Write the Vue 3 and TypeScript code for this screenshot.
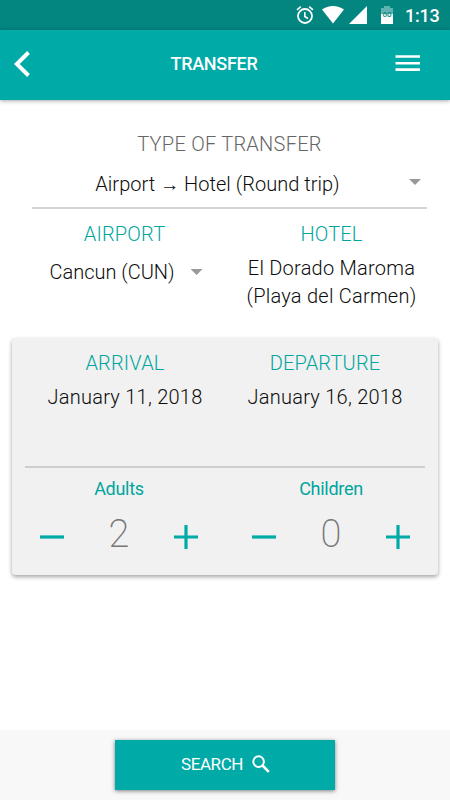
<script setup lang="ts">
import { ref } from 'vue'

interface Counter {
  label: string
  count: number
}

const counters = ref<Counter[]>([
  { label: 'Adults', count: 2 },
  { label: 'Children', count: 0 },
])

const dates = [
  { label: 'ARRIVAL', value: 'January 11, 2018' },
  { label: 'DEPARTURE', value: 'January 16, 2018' },
]

function step(counter: Counter, delta: number) {
  counter.count = Math.max(0, counter.count + delta)
}
</script>

<template>
  <div class="screen">
    <div class="status">
      <svg class="alarm" viewBox="0 0 18 20" width="18" height="20">
        <circle cx="9" cy="11" r="7" fill="none" stroke="#fff" stroke-width="1.8" />
        <path d="M1 4.8 4.8 1.6M17 4.8 13.200 1.600M8.800 7v4.500l3.200 2" fill="none" stroke="#fff" stroke-width="1.6" />
      </svg>
      <svg class="wifi" viewBox="0 0 22 18" width="22" height="18">
        <path d="M0 3.600Q5 0 11 0t11 3.600L11 17.600z" fill="#fff" />
      </svg>
      <svg class="signal" viewBox="0 0 18 18" width="18" height="18">
        <path d="M18 0v18H0z" fill="#fff" />
      </svg>
      <div class="battery">
        <svg viewBox="0 0 12 18" width="12" height="18">
          <path d="M0 2h3V0h6v2h3v6H0z" fill="#5eb2af" />
          <path d="M0 8h12v10H0z" fill="#fff" />
        </svg>
        <span class="level">60</span>
      </div>
      <span class="clock">1:13</span>
    </div>

    <header class="bar">
      <svg class="back" viewBox="0 0 16 26" width="16" height="26">
        <path d="M14.500 1.500 2.800 13l11.700 11.500" fill="none" stroke="#fff" stroke-width="4" />
      </svg>
      <h1 class="title">TRANSFER</h1>
      <svg class="menu" viewBox="0 0 25 17" width="25" height="17">
        <path d="M.5 1.500h24.500M.5 8.300h24.500M.5 14.600h24.500" stroke="#fff" stroke-width="2.600" />
      </svg>
    </header>

    <main class="content">
      <section class="type">
        <div class="type-label">TYPE OF TRANSFER</div>
        <div class="select">
          <span class="select-text">Airport <span class="arrow">→</span> Hotel (Round trip)</span>
          <i class="caret"></i>
        </div>
      </section>

      <section class="places">
        <div class="place from">
          <div class="heading">AIRPORT</div>
          <div class="airport"><span>Cancun (CUN)</span><i class="caret"></i></div>
        </div>
        <div class="place to">
          <div class="heading">HOTEL</div>
          <div class="hotel">El Dorado Maroma<br />(Playa del Carmen)</div>
        </div>
      </section>

      <section class="card">
        <div class="dates">
          <div v-for="d in dates" :key="d.label" class="date">
            <div class="heading">{{ d.label }}</div>
            <div class="date-value">{{ d.value }}</div>
          </div>
        </div>
        <div class="counters">
          <div v-for="c in counters" :key="c.label" class="counter">
            <div class="counter-label">{{ c.label }}</div>
            <div class="stepper">
              <button class="step" @click="step(c, -1)">
                <svg viewBox="0 0 24 24" width="24" height="24"><path d="M0 12h24" stroke="#00aaa7" stroke-width="3.200" /></svg>
              </button>
              <span class="count">{{ c.count }}</span>
              <button class="step" @click="step(c, 1)">
                <svg viewBox="0 0 24 24" width="24" height="24"><path d="M0 12h24M12 0v24" stroke="#00aaa7" stroke-width="3.200" /></svg>
              </button>
            </div>
          </div>
        </div>
      </section>
    </main>

    <footer class="footer">
      <button class="search">
        <span class="search-text">SEARCH</span>
        <svg viewBox="0 0 18 18" width="18" height="18">
          <circle cx="6.600" cy="6.600" r="5.300" fill="none" stroke="#fff" stroke-width="2" />
          <path d="m10.500 10.500 6.300 6.300" stroke="#fff" stroke-width="2.500" />
        </svg>
      </button>
    </footer>
  </div>
</template>

<style>
body {
  margin: 0;
  background: #fff;
}
</style>

<style scoped>
.screen {
  width: 450px;
  height: 800px;
  display: flex;
  flex-direction: column;
  overflow: hidden;
  background: #fff;
  color: #0c0c0c;
  font-family: Roboto, sans-serif;
  font-size: 20px;
  font-weight: 300;
}
.screen * {
  box-sizing: border-box;
}
svg {
  display: block;
  flex: none;
}
button {
  border: 0;
  padding: 0;
  background: none;
  font: inherit;
  color: inherit;
}
.status {
  height: 30px;
  flex: none;
  display: flex;
  align-items: flex-start;
  padding: 5px 0 0 296px;
  background: #038580;
  color: #fff;
}
.wifi {
  margin: 1px 0 0 8px;
}
.signal {
  margin: 1px 0 0 5px;
}
.battery {
  position: relative;
  margin: 1px 0 0 14px;
}
.level {
  position: absolute;
  left: 0;
  top: 4px;
  width: 12px;
  text-align: center;
  font-size: 8px;
  line-height: 10px;
  font-weight: 500;
  color: #038580;
}
.clock {
  margin-left: 12px;
  font-size: 18px;
  line-height: 22px;
  font-weight: 500;
  letter-spacing: -0.2px;
}
.bar {
  height: 70px;
  flex: none;
  display: flex;
  align-items: center;
  padding: 0 30px 3px 14px;
  background: #00aaa7;
  color: #fff;
  box-shadow: 0 1px 4px rgba(0, 0, 0, 0.35);
}
.title {
  flex: 1;
  margin: 0;
  padding-left: 3px;
  text-align: center;
  font-size: 18px;
  letter-spacing: -0.3px;
  font-weight: 500;
}
.menu {
  margin-top: -1px;
}
.content {
  flex: 1;
}
.type {
  margin: 0 23px 0 32px;
  padding-top: 30px;
  height: 109px;
  border-bottom: 2px solid #d4d4d4;
  text-align: center;
}
.type-label {
  line-height: 28px;
  letter-spacing: 0.25px;
  color: #666;
}
.select {
  display: flex;
  align-items: center;
  height: 52px;
  padding: 0 6px 0 0;
}
.select-text {
  flex: 1;
  padding-right: 6px;
  line-height: 28px;
  letter-spacing: 0.03px;
}
.arrow {
  font-size: 19px;
  line-height: 1;
}
.caret {
  flex: none;
  width: 12px;
  height: 6px;
  background: #999;
  clip-path: polygon(0 0, 100% 0, 50% 100%);
}
.select .caret {
  margin-bottom: 4px;
}
.places {
  display: flex;
  height: 129px;
  padding: 11px 18px 0 24px;
  text-align: center;
}
.place {
  flex: 1;
}
.from {
  padding-right: 5px;
}
.to {
  padding-left: 1px;
}
.heading {
  line-height: 28px;
  letter-spacing: 0.18px;
  color: #00a59f;
}
.airport {
  display: flex;
  align-items: center;
  justify-content: center;
  gap: 16px;
  height: 28px;
  margin: 10px -3px 0 0;
}
.hotel {
  margin-top: 6px;
  line-height: 28px;
  letter-spacing: 0.24px;
}
.card {
  height: 237px;
  margin: 0 12px;
  padding: 11px 13px 0;
  border-radius: 4px;
  background: #f1f1f1;
  box-shadow: 0 2px 4px rgba(0, 0, 0, 0.36);
}
.dates {
  display: flex;
  height: 119px;
  border-bottom: 2px solid #cecece;
  text-align: center;
}
.date {
  flex: 1;
}
.date-value {
  margin-top: 6px;
  line-height: 28px;
  letter-spacing: 0.26px;
}
.counters {
  display: flex;
  gap: 54px;
  padding: 9px 15px 0;
}
.counter {
  flex: 1;
  text-align: center;
}
.counter-label {
  font-size: 18px;
  letter-spacing: -0.28px;
  line-height: 24px;
  font-weight: 400;
  color: #00a59f;
}
.stepper {
  display: flex;
  justify-content: space-between;
  align-items: flex-start;
  height: 60px;
}
.step {
  margin-top: 24px;
}
.count {
  margin-top: 10px;
  font-size: 38px;
  line-height: 46px;
  font-weight: 200;
  color: #777;
}
.footer {
  flex: none;
  height: 70px;
  padding-top: 10px;
  background: #f8f8f8;
}
.search {
  display: flex;
  align-items: center;
  justify-content: center;
  gap: 9px;
  width: 220px;
  height: 50px;
  margin: 0 auto;
  padding: 0 0 2px 1px;
  background: #00aaa7;
  color: #fff;
  font-size: 17px;
  letter-spacing: -0.4px;
  font-weight: 400;
  box-shadow: 0 1px 4px rgba(0, 0, 0, 0.5);
}
</style>
